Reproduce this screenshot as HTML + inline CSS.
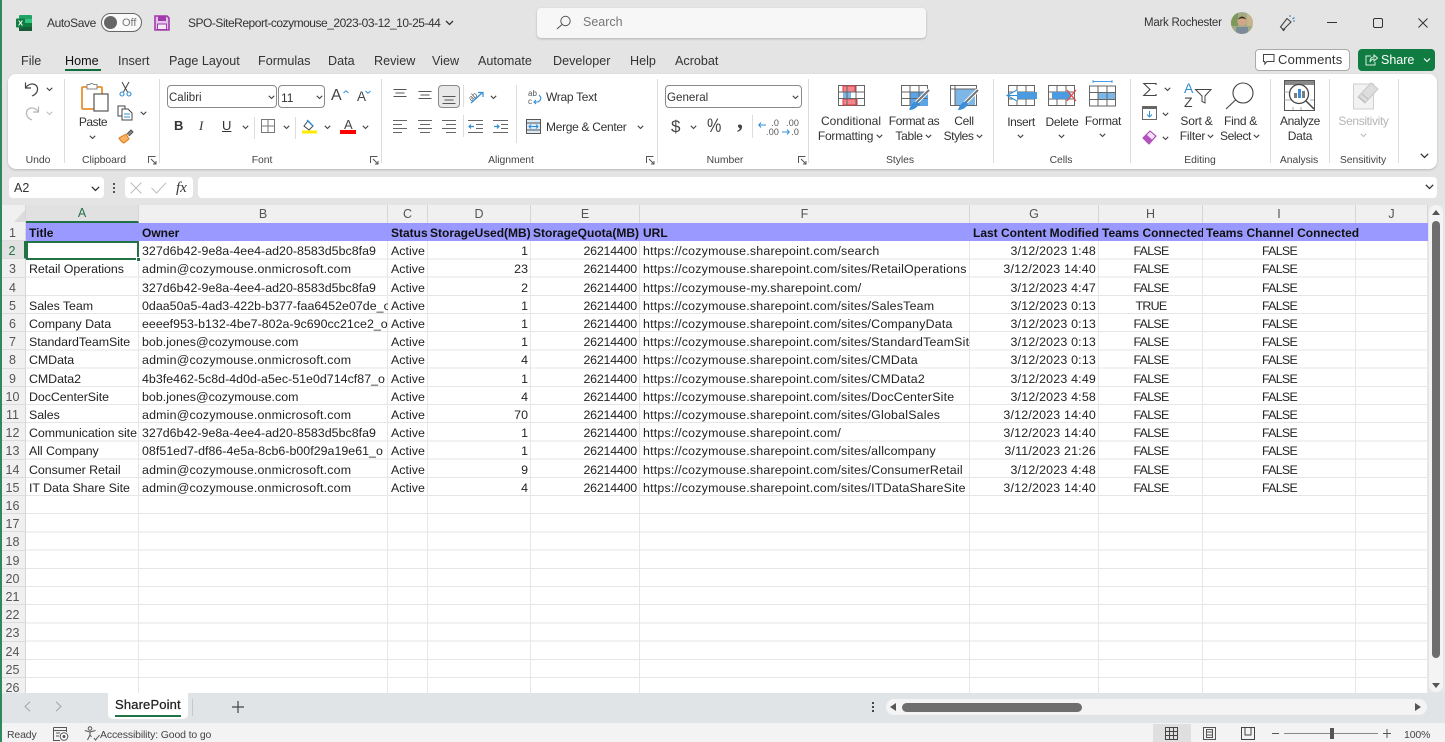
<!DOCTYPE html>
<html><head><meta charset="utf-8"><title>Excel</title>
<style>
html,body{margin:0;padding:0;width:1445px;height:742px;overflow:hidden;background:#e4e4e4}
body{font-family:"Liberation Sans",sans-serif;color:#2b2b2b;position:relative}
.t{position:absolute;white-space:nowrap;line-height:16px;font-size:12px;color:#333}
.c{transform:translateX(-50%);text-align:center}
.m{font-size:12.6px}
.g{font-size:10.4px;color:#444;letter-spacing:-.05px}
.box{position:absolute;box-sizing:border-box}
svg{position:absolute;overflow:visible}
.sep{position:absolute;width:1px;top:79px;height:84px;background:#dcdcdc}
.ch{position:absolute;top:205px;height:18px;background:#f0f0f0;border-right:1px solid #d6d6d6;box-sizing:border-box;text-align:center;font-size:12.5px;line-height:18px;color:#555}
#rows{position:absolute;left:0;top:223px;width:1428px;height:470px;overflow:hidden;background:#fff repeating-linear-gradient(to bottom,transparent 0 17.2px,#e6e6e6 17.2px 18.2px)}
.v{position:absolute;top:0;height:470px;width:1px;background:#e6e6e6}
.r{position:absolute;left:0;height:18.2px;display:flex;line-height:21px;font-size:12.4px;letter-spacing:.03px;color:#222;white-space:nowrap}
.r>*{display:block;overflow:hidden;box-sizing:border-box;padding:0 3px;flex:none;height:18.2px}
.r>*:nth-child(1){width:26px;padding:0;text-align:center;background:#f0f0f0;color:#555;letter-spacing:0;border-right:1px solid #d6d6d6;border-bottom:1px solid #dcdcdc;font-size:12.5px;font-weight:normal}
.r>*:nth-child(2){width:113px;letter-spacing:-.05px}
.r>*:nth-child(3){width:249px}
.r>*:nth-child(4){width:40px}
.r>*:nth-child(5){width:103px;text-align:right}
.r>*:nth-child(6){width:109px;text-align:right;letter-spacing:-.2px}
.r>*:nth-child(7){width:330px;letter-spacing:.2px}
.r>*:nth-child(8){width:129px;text-align:right;letter-spacing:.2px}
.r>*:nth-child(9){width:104px;text-align:center;letter-spacing:-.7px}
.r>*:nth-child(10){width:153px;text-align:center;letter-spacing:-.7px}
.r>.e{letter-spacing:.19px}
.h{background:#9999ff;font-weight:bold;font-size:12px;color:#111;width:1428px}
.h>*:nth-child(n+2){text-align:left;letter-spacing:0}
.h>*:nth-child(10){overflow:visible}
.h>*:nth-child(5),.h>*:nth-child(6){padding:0 2px}
</style></head><body>

<!-- Title bar -->
<svg style="left:16px;top:15px" width="16" height="16" viewBox="0 0 16 16"><rect x="3" y="0" width="13" height="16" rx="1" fill="#21a366"/><rect x="9" y="4" width="7" height="4" fill="#33c481"/><rect x="9" y="8" width="7" height="4" fill="#107c41"/><rect x="3" y="12" width="13" height="4" fill="#185c37"/><rect x="0" y="3.5" width="9" height="9" rx="1" fill="#107c41"/><text x="4.5" y="10.5" font-size="7.5" font-weight="bold" fill="#fff" text-anchor="middle" font-family="Liberation Sans">X</text></svg>
<span class="t" style="left:47px;top:15px;letter-spacing:-.4px">AutoSave</span>
<div class="box" style="left:101px;top:13px;width:41px;height:19px;border:1px solid #666;border-radius:10px;background:#fafafa"></div>
<div class="box" style="left:104px;top:16px;width:13px;height:13px;border-radius:50%;background:#666"></div>
<span class="t" style="left:122px;top:15px;font-size:11px;color:#777">Off</span>
<svg style="left:154px;top:15px" width="16" height="16" viewBox="0 0 16 16"><path d="M1 1H13L15 3V15H1Z" fill="#e3c4ea" stroke="#a13aaa" stroke-width="1.6"/><rect x="4" y="1.5" width="8" height="4.5" fill="#a13aaa"/><rect x="3.5" y="9" width="9" height="5.5" fill="#f4e8f6" stroke="#a13aaa"/></svg>
<span class="t" style="left:188px;top:15px;font-size:12px;letter-spacing:-.48px">SPO-SiteReport-cozymouse_2023-03-12_10-25-44</span>
<svg style="left:445px;top:20px" width="9" height="6" viewBox="0 0 9 6"><path d="M1 1L4.500 4.500L8 1" fill="none" stroke="#333" stroke-width="1.300"/></svg>

<div class="box" style="left:537px;top:8px;width:389px;height:30px;background:#f7f7f7;border-radius:4px;box-shadow:0 1px 2px rgba(0,0,0,.22)"></div>
<svg style="left:556px;top:15px" width="16" height="15" viewBox="0 0 16 15"><circle cx="9.500" cy="6" r="4.700" fill="none" stroke="#555" stroke-width="1"/><path d="M6 9.500L1 14" stroke="#555" stroke-width="1.100"/></svg>
<span class="t" style="left:583px;top:14px;font-size:12.5px;color:#777">Search</span>

<span class="t" style="left:1144px;top:15px;font-size:11.500px;letter-spacing:-.25px">Mark Rochester</span>
<svg style="left:1231px;top:12px" width="22" height="22" viewBox="0 0 22 22"><defs><clipPath id="av"><circle cx="11" cy="11" r="11"/></clipPath></defs><g clip-path="url(#av)"><rect width="22" height="22" fill="#a3ab86"/><rect x="0" y="0" width="7" height="14" fill="#7b9a5a"/><rect x="16" y="2" width="6" height="12" fill="#c7b58d"/><rect x="5" y="15" width="12" height="7" fill="#7d8a98"/><circle cx="11" cy="9" r="4.800" fill="#d0a888"/><path d="M6.500 7.500Q11 1.500 15.500 7.500Q11 5 6.500 7.500Z" fill="#33291f"/></g></svg>
<svg style="left:1279px;top:14px" width="18" height="18" viewBox="0 0 18 18"><path d="M1.500 13L8 4.500L12 8L4.500 15.500ZM3 14.500L4.500 16.500L6 15" fill="none" stroke="#444" stroke-width="1.100"/><path d="M11 3V1M13.500 5L15.500 3.500M14 7H16" stroke="#3a86c8" stroke-width="1.100"/></svg>
<div class="box" style="left:1327px;top:22px;width:10px;height:1px;background:#333"></div>
<div class="box" style="left:1373px;top:18px;width:10px;height:10px;border:1.200px solid #333;border-radius:2px"></div>
<svg style="left:1418px;top:18px" width="10" height="10" viewBox="0 0 10 10"><path d="M.5 .5L9.500 9.500M9.500 .5L.5 9.500" stroke="#333" stroke-width="1"/></svg>

<!-- Menu -->
<span class="t m" style="left:21px;top:53px">File</span>
<span class="t m" style="left:65px;top:53px;color:#111">Home</span>
<div class="box" style="left:65px;top:69px;width:36px;height:2px;background:#0f6c3c"></div>
<span class="t m" style="left:118px;top:53px">Insert</span>
<span class="t m" style="left:169px;top:53px">Page Layout</span>
<span class="t m" style="left:258px;top:53px">Formulas</span>
<span class="t m" style="left:328px;top:53px">Data</span>
<span class="t m" style="left:374px;top:53px">Review</span>
<span class="t m" style="left:432px;top:53px">View</span>
<span class="t m" style="left:478px;top:53px">Automate</span>
<span class="t m" style="left:553px;top:53px">Developer</span>
<span class="t m" style="left:630px;top:53px">Help</span>
<span class="t m" style="left:675px;top:53px">Acrobat</span>

<div class="box" style="left:1255px;top:49px;width:95px;height:22px;background:#fff;border:1px solid #aaa;border-radius:4px"></div>
<svg style="left:1263px;top:54px" width="12" height="11" viewBox="0 0 12 11"><path d="M.5 .5H11V7.500H4L1.800 10V7.500H.5Z" fill="none" stroke="#444"/></svg>
<span class="t" style="left:1278px;top:52px;font-size:13px;letter-spacing:.2px">Comments</span>
<div class="box" style="left:1358px;top:49px;width:77px;height:22px;background:#107c41;border-radius:4px"></div>
<svg style="left:1365px;top:54px" width="13" height="12" viewBox="0 0 13 12"><path d="M6 2H1V11H10V8M5 8Q5 3 9 3V1L12.500 4L9 7V5Q6.500 5 5 8Z" fill="none" stroke="#d8eee1"/></svg>
<span class="t" style="left:1381px;top:52px;font-size:12.500px;color:#fff">Share</span>
<svg style="left:1423px;top:58px" width="8" height="5" viewBox="0 0 8 5"><path d="M1 .5L4 3.500L7 .5" fill="none" stroke="#fff" stroke-width="1.100"/></svg>

<!-- Ribbon -->
<div class="box" style="left:8px;top:74px;width:1429px;height:95px;background:#fff;border-radius:8px;box-shadow:0 1px 2px rgba(0,0,0,.2)"></div>
<div class="sep" style="left:64px"></div><div class="sep" style="left:159px"></div><div class="sep" style="left:381px"></div><div class="sep" style="left:657px"></div><div class="sep" style="left:808px"></div><div class="sep" style="left:993px"></div><div class="sep" style="left:1130px"></div><div class="sep" style="left:1270px"></div><div class="sep" style="left:1329px"></div><div class="sep" style="left:1398px"></div>

<span class="t g c" style="left:38px;top:153px">Undo</span>
<span class="t g c" style="left:104px;top:153px">Clipboard</span>
<span class="t g c" style="left:262px;top:153px">Font</span>
<span class="t g c" style="left:511px;top:153px">Alignment</span>
<span class="t g c" style="left:725px;top:153px">Number</span>
<span class="t g c" style="left:900px;top:153px">Styles</span>
<span class="t g c" style="left:1061px;top:153px">Cells</span>
<span class="t g c" style="left:1200px;top:153px">Editing</span>
<span class="t g c" style="left:1299px;top:153px">Analysis</span>
<span class="t g c" style="left:1363px;top:153px">Sensitivity</span>

<!-- dialog launchers -->
<svg width="0" height="0" style="left:0;top:0"><defs><g id="dl"><path d="M.5 7V.5H7.500M3 3L8 8M8 5V8H5" fill="none" stroke="#555" stroke-width="1"/></g><g id="cv"><path d="M.8 .8L3.500 3.500L6.200 .8" fill="none" stroke="#444" stroke-width="1.100"/></g></defs></svg>
<svg style="left:148px;top:156px" width="9" height="9"><use href="#dl"/></svg>
<svg style="left:370px;top:156px" width="9" height="9"><use href="#dl"/></svg>
<svg style="left:646px;top:156px" width="9" height="9"><use href="#dl"/></svg>
<svg style="left:798px;top:156px" width="9" height="9"><use href="#dl"/></svg>

<!-- Undo/redo -->
<svg style="left:24px;top:81px" width="16" height="16" viewBox="0 0 16 16"><path d="M1.500 1.500V7H7M1.800 6.500Q5 2.500 9 3Q14 4 13.500 9Q13 13 8 15" fill="none" stroke="#444" stroke-width="1.200"/></svg>
<svg style="left:46px;top:87px" width="7" height="5"><use href="#cv"/></svg>
<svg style="left:24px;top:105px" width="16" height="16" viewBox="0 0 16 16"><path d="M14.500 1.500V7H9M14.200 6.500Q11 2.500 7 3Q2 4 2.500 9Q3 13 8 15" fill="none" stroke="#b5b5b5" stroke-width="1.200"/></svg>
<svg style="left:46px;top:111px" width="7" height="5"><use href="#cv" opacity=".35"/></svg>

<!-- Clipboard -->
<svg style="left:81px;top:82px" width="28" height="30" viewBox="0 0 28 30"><rect x="1" y="5" width="20" height="22" rx="1" fill="#fff" stroke="#e8912f" stroke-width="1.800"/><path d="M6 5V2.500H9Q10.500 0 12.500 2.500H16V7H6Z" fill="#fff" stroke="#888"/><rect x="13" y="12" width="14" height="17" fill="#fff" stroke="#555" stroke-width="1.200"/></svg>
<span class="t c" style="left:93px;top:114px;letter-spacing:-.5px">Paste</span>
<svg style="left:89px;top:135px" width="7" height="5"><use href="#cv"/></svg>
<svg style="left:119px;top:81px" width="13" height="16" viewBox="0 0 13 16"><path d="M3 1L8.500 11M10 1L4.500 11" stroke="#444" fill="none"/><circle cx="3" cy="13" r="2" fill="none" stroke="#2f8fd6" stroke-width="1.100"/><circle cx="10" cy="13" r="2" fill="none" stroke="#2f8fd6" stroke-width="1.100"/></svg>
<svg style="left:117px;top:105px" width="17" height="16" viewBox="0 0 17 16"><path d="M5 11H1V1H8V4" fill="none" stroke="#444"/><path d="M5 4H11L15 8V15H5Z" fill="#fff" stroke="#444"/><path d="M7 9H13M7 12H13" stroke="#2f8fd6"/></svg>
<svg style="left:140px;top:111px" width="7" height="5"><use href="#cv"/></svg>
<svg style="left:118px;top:129px" width="16" height="15" viewBox="0 0 16 15"><path d="M1 9L8 5L11 10L6 14Q3 13 1 9Z" fill="#f7b267" stroke="#e07a12"/><path d="M9 5L13 1L15 3L11 7" fill="#888" stroke="#555"/></svg>

<!-- Font -->
<div class="box" style="left:167px;top:85px;width:110px;height:23px;border:1px solid #8a8a8a;border-radius:4px"></div>
<span class="t" style="left:169px;top:90px;font-size:11.500px">Calibri</span>
<svg style="left:268px;top:95px" width="7" height="5"><use href="#cv"/></svg>
<div class="box" style="left:278px;top:85px;width:47px;height:23px;border:1px solid #8a8a8a;border-radius:4px"></div>
<span class="t" style="left:281px;top:90px;font-size:12px">11</span>
<svg style="left:316px;top:95px" width="7" height="5"><use href="#cv"/></svg>
<span class="t" style="left:331px;top:88px;font-size:16px;color:#444">A</span>
<svg style="left:343px;top:90px" width="6" height="4"><path d="M.5 3L3 .8L5.500 3" fill="none" stroke="#2f8fd6"/></svg>
<span class="t" style="left:357px;top:89px;font-size:13.500px;color:#444">A</span>
<svg style="left:365px;top:90px" width="6" height="4"><path d="M.5 1L3 3.200L5.500 1" fill="none" stroke="#2f8fd6"/></svg>
<span class="t" style="left:174px;top:118px;font-size:13px;font-weight:bold">B</span>
<span class="t" style="left:199px;top:118px;font-size:13px;font-style:italic;font-family:'Liberation Serif',serif">I</span>
<span class="t" style="left:222px;top:118px;font-size:13px;text-decoration:underline">U</span>
<svg style="left:242px;top:125px" width="7" height="5"><use href="#cv"/></svg>
<div class="box" style="left:254px;top:117px;width:1px;height:22px;background:#ddd"></div>
<svg style="left:261px;top:119px" width="14" height="14" viewBox="0 0 14 14"><path d="M.5 .5H13.500V13.500H.5ZM7 .5V13.500M.5 7H13.500" fill="none" stroke="#777"/></svg>
<svg style="left:283px;top:125px" width="7" height="5"><use href="#cv"/></svg>
<div class="box" style="left:295px;top:117px;width:1px;height:22px;background:#ddd"></div>
<svg style="left:302px;top:119px" width="15" height="15" viewBox="0 0 15 15"><path d="M2 7L6 2L11 7L7 11Z" fill="#fff" stroke="#444"/><path d="M5 1L11 7" stroke="#2f8fd6" stroke-width="1.500"/><rect x="0" y="11.500" width="15" height="3" fill="#ffed00"/></svg>
<svg style="left:324px;top:125px" width="7" height="5"><use href="#cv"/></svg>
<span class="t" style="left:344px;top:117px;font-size:13px;color:#444">A</span>
<div class="box" style="left:340px;top:130px;width:16px;height:4px;background:#f00"></div>
<svg style="left:362px;top:125px" width="7" height="5"><use href="#cv"/></svg>

<!-- Alignment -->
<svg style="left:393px;top:89px" width="14" height="10" viewBox="0 0 14 10"><path d="M.5 .5H13.500M2.500 4H11.500M.5 7.500H13.500" stroke="#555"/></svg>
<svg style="left:418px;top:91px" width="14" height="10" viewBox="0 0 14 10"><path d="M.5 .5H13.500M2.500 4H11.500M.5 7.500H13.500" stroke="#555"/></svg>
<div class="box" style="left:438px;top:85px;width:22px;height:23px;background:#e8e8e8;border:1px solid #8a8a8a;border-radius:4px"></div>
<svg style="left:442px;top:96px" width="14" height="10" viewBox="0 0 14 10"><path d="M.5 .5H13.500M2.500 4H11.500M.5 7.500H13.500" stroke="#555"/></svg>
<svg style="left:468px;top:88px" width="17" height="17" viewBox="0 0 17 17"><text x="0" y="11" font-size="8" fill="#555" transform="rotate(-40 5 8)" font-family="Liberation Sans">ab</text><path d="M3 15L14 5M10 4.500H15V9" fill="none" stroke="#2f8fd6" stroke-width="1.200"/></svg>
<svg style="left:490px;top:95px" width="7" height="5"><use href="#cv"/></svg>
<div class="box" style="left:463px;top:85px;width:1px;height:22px;background:#ddd"></div>
<svg style="left:393px;top:120px" width="14" height="14" viewBox="0 0 14 14"><path d="M0 .5H14M0 4.500H9M0 8.500H14M0 12.500H9" stroke="#666"/></svg>
<svg style="left:418px;top:120px" width="14" height="14" viewBox="0 0 14 14"><path d="M0 .5H14M2 4.500H12M0 8.500H14M2 12.500H12" stroke="#666"/></svg>
<svg style="left:442px;top:120px" width="14" height="14" viewBox="0 0 14 14"><path d="M0 .5H14M4 4.500H14M0 8.500H14M4 12.500H14" stroke="#666"/></svg>
<div class="box" style="left:463px;top:115px;width:1px;height:22px;background:#ddd"></div>
<svg style="left:468px;top:120px" width="15" height="14" viewBox="0 0 15 14"><path d="M0 .5H15M8 4.500H15M8 8.500H15M0 12.500H15" stroke="#666"/><path d="M6 6.500H1M3 4.500L1 6.500L3 8.500" fill="none" stroke="#2f8fd6" stroke-width="1.200"/></svg>
<svg style="left:493px;top:120px" width="15" height="14" viewBox="0 0 15 14"><path d="M0 .5H15M8 4.500H15M8 8.500H15M0 12.500H15" stroke="#666"/><path d="M1 6.500H6M4 4.500L6 6.500L4 8.500" fill="none" stroke="#2f8fd6" stroke-width="1.200"/></svg>
<div class="box" style="left:516px;top:85px;width:1px;height:58px;background:#ddd"></div>
<svg style="left:528px;top:89px" width="15" height="16" viewBox="0 0 15 16"><text x="0" y="7" font-size="8" fill="#555" font-family="Liberation Sans">ab</text><text x="0" y="15" font-size="8" fill="#555" font-family="Liberation Sans">c</text><path d="M11 6Q15 10 10 13H6M8 11L6 13L8 15" fill="none" stroke="#2f8fd6" stroke-width="1.100"/></svg>
<span class="t" style="left:546px;top:89px;letter-spacing:-.3px">Wrap Text</span>
<svg style="left:526px;top:119px" width="15" height="15" viewBox="0 0 15 15"><rect x=".5" y=".5" width="14" height="14" fill="#dbeaf7" stroke="#555"/><path d="M.5 4H14.500M.5 11H14.500" stroke="#555"/><path d="M3 7.500H12M5 5.500L3 7.500L5 9.500M10 5.500L12 7.500L10 9.500" fill="none" stroke="#2f8fd6"/></svg>
<span class="t" style="left:546px;top:119px;letter-spacing:-.3px">Merge &amp; Center</span>
<svg style="left:637px;top:125px" width="7" height="5"><use href="#cv"/></svg>

<!-- Number -->
<div class="box" style="left:665px;top:85px;width:137px;height:23px;border:1px solid #8a8a8a;border-radius:4px"></div>
<span class="t" style="left:667px;top:90px;font-size:11.600px">General</span>
<svg style="left:792px;top:95px" width="7" height="5"><use href="#cv"/></svg>
<span class="t" style="left:671px;top:119px;font-size:17px;color:#444">$</span>
<svg style="left:690px;top:125px" width="7" height="5"><use href="#cv"/></svg>
<span class="t" style="left:707px;top:119px;font-size:19px;color:#444;transform:scaleX(.85);transform-origin:0 50%">%</span>
<span class="t" style="left:737px;top:113px;font-size:24px;font-weight:bold;color:#444;font-family:'Liberation Serif',serif">,</span>
<div class="box" style="left:752px;top:115px;width:1px;height:23px;background:#ddd"></div>
<span class="t" style="left:766px;top:119px;font-size:9px;line-height:9px;color:#555;white-space:pre-line;text-align:right;letter-spacing:.2px">.0
.00</span>
<svg style="left:758px;top:122px" width="8" height="6"><path d="M8 3H1M3 .5L.8 3L3 5.500" fill="none" stroke="#2f8fd6"/></svg>
<span class="t" style="left:786px;top:119px;font-size:9px;line-height:9px;color:#555;white-space:pre-line;letter-spacing:.2px;text-align:right">.00
.0</span>
<svg style="left:782px;top:129px" width="8" height="6"><path d="M0 3H7M5 .5L7.200 3L5 5.500" fill="none" stroke="#2f8fd6"/></svg>

<!-- Styles -->
<svg style="left:838px;top:85px" width="27" height="21" viewBox="0 0 27 21"><rect x=".5" y=".5" width="26" height="20" fill="#fff" stroke="#666"/><rect x="5" y="1" width="12" height="6" fill="#f4848d" stroke="#e03a3a"/><rect x="5" y="7" width="8" height="6" fill="#7db7e8"/><rect x="5" y="14" width="14" height="6" fill="#f4848d" stroke="#e03a3a"/><path d="M.5 7H26.500M.5 13.500H26.500M9 .5V20.500M18 .5V20.500" stroke="#666" fill="none"/></svg>
<span class="t c" style="left:851px;top:113px">Conditional</span>
<span class="t c" style="left:845.500px;top:128px;letter-spacing:-.2px">Formatting</span>
<svg style="left:876px;top:134px" width="7" height="5"><use href="#cv"/></svg>
<svg style="left:901px;top:85px" width="29" height="26" viewBox="0 0 29 26"><rect x=".5" y=".5" width="26" height="20" fill="#fff" stroke="#666"/><rect x="9" y="7" width="18" height="14" fill="#5ba4e6"/><path d="M.5 7H26.500M.5 13.500H26.500M9 .5V20.500M18 .5V20.500" stroke="#666" fill="none"/><path d="M28 5L15 18" stroke="#fff" stroke-width="4"/><path d="M28 5L15 18" stroke="#777" stroke-width="2"/><path d="M16 16Q10 18 8 25Q15 25 18 19Z" fill="#3a8fd8"/></svg>
<span class="t c" style="left:914px;top:113px;letter-spacing:-.4px">Format as</span>
<span class="t c" style="left:909px;top:128px;letter-spacing:-.3px">Table</span>
<svg style="left:925px;top:134px" width="7" height="5"><use href="#cv"/></svg>
<svg style="left:950px;top:85px" width="29" height="26" viewBox="0 0 29 26"><rect x=".5" y=".5" width="26" height="20" fill="#fff" stroke="#666"/><rect x="5" y="4" width="20" height="16" fill="#7db7e8"/><path d="M.5 4H26.500M5 .5V20.500" stroke="#666"/><path d="M28 5L15 18" stroke="#fff" stroke-width="4"/><path d="M28 5L15 18" stroke="#777" stroke-width="2"/><path d="M16 16Q10 18 8 25Q15 25 18 19Z" fill="#3a8fd8"/></svg>
<span class="t c" style="left:964px;top:113px;letter-spacing:-.3px">Cell</span>
<span class="t c" style="left:958.500px;top:128px;letter-spacing:-.5px">Styles</span>
<svg style="left:976px;top:134px" width="7" height="5"><use href="#cv"/></svg>

<!-- Cells -->
<svg style="left:1006px;top:85px" width="31" height="21" viewBox="0 0 31 21"><rect x="2.500" y=".5" width="26" height="20" fill="#fff" stroke="#666"/><path d="M2.500 7H28.500M2.500 14H28.500M11 .5V20.500M20 .5V20.500" stroke="#666"/><rect x="10" y="7" width="21" height="7" fill="#4a9be0"/><path d="M11 5L1 10.500L11 16M1 10.500H11" fill="#fff" stroke="#2f8fd6"/></svg>
<span class="t c" style="left:1021px;top:114px;letter-spacing:-.4px">Insert</span>
<svg style="left:1017px;top:134px" width="7" height="5"><use href="#cv"/></svg>
<svg style="left:1048px;top:85px" width="29" height="21" viewBox="0 0 29 21"><rect x=".5" y=".5" width="26" height="20" fill="#fff" stroke="#666"/><path d="M.5 7H26.500M.5 14H26.500M9 .5V20.500M18 .5V20.500" stroke="#666"/><rect x="4" y="7" width="14" height="7" fill="#4a9be0"/><path d="M18 6L24 10.500L18 15" fill="#4a9be0"/><path d="M19 5L28 16M28 5L19 16" stroke="#e8453c" stroke-width="1.200"/></svg>
<span class="t c" style="left:1062px;top:114px;letter-spacing:-.3px">Delete</span>
<svg style="left:1058px;top:134px" width="7" height="5"><use href="#cv"/></svg>
<svg style="left:1089px;top:80px" width="27" height="27" viewBox="0 0 27 27"><path d="M4 1.500H23M4 0V3M23 0V3" stroke="#4a9be0"/><rect x=".5" y="6" width="26" height="20" fill="#fff" stroke="#666"/><rect x="9" y="12.500" width="17" height="7" fill="#7db7e8"/><path d="M.5 12.500H26.500M.5 19.500H26.500M9 6V26M18 6V26" stroke="#666"/></svg>
<span class="t c" style="left:1103px;top:113px;letter-spacing:-.3px">Format</span>
<svg style="left:1099px;top:133px" width="7" height="5"><use href="#cv"/></svg>

<!-- Editing -->
<svg style="left:1143px;top:83px" width="14" height="13" viewBox="0 0 14 13"><path d="M13 2V.5H.8L7 6.500L.8 12.500H13V11" fill="none" stroke="#444" stroke-width="1.100"/></svg>
<svg style="left:1164px;top:87px" width="7" height="5"><use href="#cv"/></svg>
<svg style="left:1142px;top:106px" width="15" height="14" viewBox="0 0 15 14"><rect x=".5" y=".5" width="14" height="13" fill="#fff" stroke="#666"/><rect x="0" y="0" width="15" height="3" fill="#666"/><path d="M7.500 5V11M5 8.500L7.500 11L10 8.500" fill="none" stroke="#2f8fd6"/></svg>
<svg style="left:1162px;top:112px" width="7" height="5"><use href="#cv"/></svg>
<svg style="left:1142px;top:130px" width="15" height="15" viewBox="0 0 15 15"><path d="M1 8L8 1L14 6L7 14Z" fill="#f4dff7" stroke="#a13aaa"/><path d="M1 8L4.500 4.500L10.500 10L7 14Z" fill="#b455bf"/></svg>
<svg style="left:1162px;top:136px" width="7" height="5"><use href="#cv"/></svg>
<span class="t" style="left:1184px;top:81px;font-size:14px;line-height:14px;color:#2f8fd6">A</span>
<span class="t" style="left:1184px;top:95px;font-size:14px;line-height:14px;color:#444">Z</span>
<svg style="left:1195px;top:89px" width="17" height="15" viewBox="0 0 17 15"><path d="M.5 .5H16L10 7V14L7 12.500V7Z" fill="#fff" stroke="#444"/></svg>
<span class="t c" style="left:1196.500px;top:113px;letter-spacing:-.2px">Sort &amp;</span>
<span class="t c" style="left:1192.500px;top:128px;letter-spacing:-.2px">Filter</span>
<svg style="left:1207px;top:134px" width="7" height="5"><use href="#cv"/></svg>
<svg style="left:1225px;top:82px" width="30" height="28" viewBox="0 0 30 28"><circle cx="18" cy="11" r="10" fill="#fff" stroke="#444" stroke-width="1.100"/><path d="M10.500 18L1 27" stroke="#444" stroke-width="1.100"/></svg>
<span class="t c" style="left:1240.500px;top:113px;letter-spacing:-.3px">Find &amp;</span>
<span class="t c" style="left:1235.500px;top:128px;letter-spacing:-.4px">Select</span>
<svg style="left:1253px;top:134px" width="7" height="5"><use href="#cv"/></svg>

<!-- Analyze -->
<svg style="left:1284px;top:80px" width="32" height="31" viewBox="0 0 32 31"><rect x=".5" y=".5" width="30" height="30" fill="#fff" stroke="#555"/><rect x="1" y="1" width="29" height="4" fill="#888"/><path d="M.5 12H5M.5 20H7M26 20H30M9 27V30M17 27V30" stroke="#aaa"/><circle cx="15" cy="14" r="9.500" fill="#fff" stroke="#444" stroke-width="1.300"/><path d="M22 21L30 29" stroke="#444" stroke-width="1.500"/><rect x="10" y="13" width="3" height="5" fill="#7c7c7c"/><rect x="14" y="9" width="3" height="9" fill="#3a8fd8"/><rect x="18" y="11" width="3" height="7" fill="#7c7c7c"/></svg>
<span class="t c" style="left:1300px;top:113px;letter-spacing:-.4px">Analyze</span>
<span class="t c" style="left:1300px;top:128px;letter-spacing:-.2px">Data</span>

<!-- Sensitivity -->
<svg style="left:1353px;top:81px" width="28" height="29" viewBox="0 0 28 29"><rect x=".5" y="3" width="20" height="25" fill="#f2f2f2" stroke="#cfcfcf"/><path d="M5 16L18 2L25 8L12 22Z" fill="#ddd" stroke="#c8c8c8"/><path d="M6 16L12 21M9 13L15 18" stroke="#bbb"/></svg>
<span class="t c" style="left:1363.500px;top:113px;color:#b5b5b5;letter-spacing:-.35px">Sensitivity</span>
<svg style="left:1360px;top:133px" width="7" height="5"><use href="#cv" opacity=".35"/></svg>
<svg style="left:1420px;top:153px" width="9" height="6" viewBox="0 0 9 6"><path d="M.8 .8L4.500 4.500L8.200 .8" fill="none" stroke="#333" stroke-width="1.300"/></svg>

<!-- Formula bar -->
<div class="box" style="left:9px;top:177px;width:95px;height:21px;background:#fff;border-radius:4px"></div>
<span class="t" style="left:14px;top:180px;font-size:12.500px">A2</span>
<svg style="left:91px;top:186px" width="9" height="6" viewBox="0 0 9 6"><path d="M.8 .8L4.500 4.500L8.200 .8" fill="none" stroke="#333" stroke-width="1.300"/></svg>
<div class="box" style="left:113px;top:183px;width:2px;height:2px;background:#555;box-shadow:0 4px #555,0 8px #555"></div>
<div class="box" style="left:125px;top:177px;width:68px;height:21px;background:#fff;border-radius:4px"></div>
<svg style="left:130px;top:182px" width="12" height="12" viewBox="0 0 12 12"><path d="M.5 .5L11.500 11.500M11.500 .5L.5 11.500" stroke="#bcbcbc"/></svg>
<svg style="left:151px;top:182px" width="16" height="12" viewBox="0 0 16 12"><path d="M.5 6L5.500 11L15 .8" fill="none" stroke="#bcbcbc"/></svg>
<span class="t" style="left:176px;top:180px;font-size:15px;font-style:italic;font-family:'Liberation Serif',serif;color:#333">fx</span>
<div class="box" style="left:198px;top:177px;width:1239px;height:21px;background:#fff;border-radius:4px"></div>
<svg style="left:1425px;top:184px" width="9" height="6" viewBox="0 0 9 6"><path d="M.8 .8L4.500 4.500L8.200 .8" fill="none" stroke="#333" stroke-width="1.300"/></svg>

<!-- Grid column headers -->
<div class="box" style="left:0;top:205px;width:26px;height:18px;background:#f0f0f0;border-right:1px solid #d6d6d6"></div>
<svg style="left:14px;top:210px" width="11" height="12"><path d="M11 0V12H0Z" fill="#dcdcdc"/></svg>
<div class="ch" style="left:26px;width:113px;background:#e1e1e1;color:#217346;border-bottom:2px solid #217346;line-height:17px">A</div>
<div class="ch" style="left:139px;width:249px">B</div>
<div class="ch" style="left:388px;width:40px">C</div>
<div class="ch" style="left:428px;width:103px">D</div>
<div class="ch" style="left:531px;width:109px">E</div>
<div class="ch" style="left:640px;width:330px">F</div>
<div class="ch" style="left:970px;width:129px">G</div>
<div class="ch" style="left:1099px;width:104px">H</div>
<div class="ch" style="left:1203px;width:153px">I</div>
<div class="ch" style="left:1356px;width:72px">J</div>

<div id="rows">
<i class="v" style="left:138px"></i><i class="v" style="left:387px"></i><i class="v" style="left:427px"></i><i class="v" style="left:530px"></i><i class="v" style="left:639px"></i><i class="v" style="left:969px"></i><i class="v" style="left:1098px"></i><i class="v" style="left:1202px"></i><i class="v" style="left:1355px"></i><i class="v" style="left:1427px"></i>
<div class="r h" style="top:0"><b style="font-size:12.500px">1</b><span>Title</span><span>Owner</span><span>Status</span><span>StorageUsed(MB)</span><span>StorageQuota(MB)</span><span>URL</span><span>Last Content Modified</span><span>Teams Connected</span><span>Teams Channel Connected</span></div>
<div class="r" style="top:18.200px"><b style="background:#e1e1e1;color:#217346;border-right:2px solid #217346">2</b><span></span><span>327d6b42-9e8a-4ee4-ad20-8583d5bc8fa9</span><span>Active</span><span>1</span><span>26214400</span><span>https://cozymouse.sharepoint.com/search</span><span>3/12/2023 1:48</span><span>FALSE</span><span>FALSE</span></div>
<div class="r" style="top:36.400px"><b>3</b><span>Retail Operations</span><span class="e">admin@cozymouse.onmicrosoft.com</span><span>Active</span><span>23</span><span>26214400</span><span>https://cozymouse.sharepoint.com/sites/RetailOperations</span><span>3/12/2023 14:40</span><span>FALSE</span><span>FALSE</span></div>
<div class="r" style="top:54.600px"><b>4</b><span></span><span>327d6b42-9e8a-4ee4-ad20-8583d5bc8fa9</span><span>Active</span><span>2</span><span>26214400</span><span>https://cozymouse-my.sharepoint.com/</span><span>3/12/2023 4:47</span><span>FALSE</span><span>FALSE</span></div>
<div class="r" style="top:72.800px"><b>5</b><span>Sales Team</span><span>0daa50a5-4ad3-422b-b377-faa6452e07de_o</span><span>Active</span><span>1</span><span>26214400</span><span>https://cozymouse.sharepoint.com/sites/SalesTeam</span><span>3/12/2023 0:13</span><span>TRUE</span><span>FALSE</span></div>
<div class="r" style="top:91px"><b>6</b><span>Company Data</span><span>eeeef953-b132-4be7-802a-9c690cc21ce2_o</span><span>Active</span><span>1</span><span>26214400</span><span>https://cozymouse.sharepoint.com/sites/CompanyData</span><span>3/12/2023 0:13</span><span>FALSE</span><span>FALSE</span></div>
<div class="r" style="top:109.200px"><b>7</b><span>StandardTeamSite</span><span>bob.jones@cozymouse.com</span><span>Active</span><span>1</span><span>26214400</span><span>https://cozymouse.sharepoint.com/sites/StandardTeamSite</span><span>3/12/2023 0:13</span><span>FALSE</span><span>FALSE</span></div>
<div class="r" style="top:127.400px"><b>8</b><span>CMData</span><span class="e">admin@cozymouse.onmicrosoft.com</span><span>Active</span><span>4</span><span>26214400</span><span>https://cozymouse.sharepoint.com/sites/CMData</span><span>3/12/2023 0:13</span><span>FALSE</span><span>FALSE</span></div>
<div class="r" style="top:145.600px"><b>9</b><span>CMData2</span><span>4b3fe462-5c8d-4d0d-a5ec-51e0d714cf87_o</span><span>Active</span><span>1</span><span>26214400</span><span>https://cozymouse.sharepoint.com/sites/CMData2</span><span>3/12/2023 4:49</span><span>FALSE</span><span>FALSE</span></div>
<div class="r" style="top:163.800px"><b>10</b><span>DocCenterSite</span><span>bob.jones@cozymouse.com</span><span>Active</span><span>4</span><span>26214400</span><span>https://cozymouse.sharepoint.com/sites/DocCenterSite</span><span>3/12/2023 4:58</span><span>FALSE</span><span>FALSE</span></div>
<div class="r" style="top:182px"><b>11</b><span>Sales</span><span class="e">admin@cozymouse.onmicrosoft.com</span><span>Active</span><span>70</span><span>26214400</span><span>https://cozymouse.sharepoint.com/sites/GlobalSales</span><span>3/12/2023 14:40</span><span>FALSE</span><span>FALSE</span></div>
<div class="r" style="top:200.200px"><b>12</b><span>Communication site</span><span>327d6b42-9e8a-4ee4-ad20-8583d5bc8fa9</span><span>Active</span><span>1</span><span>26214400</span><span>https://cozymouse.sharepoint.com/</span><span>3/12/2023 14:40</span><span>FALSE</span><span>FALSE</span></div>
<div class="r" style="top:218.400px"><b>13</b><span>All Company</span><span>08f51ed7-df86-4e5a-8cb6-b00f29a19e61_o</span><span>Active</span><span>1</span><span>26214400</span><span>https://cozymouse.sharepoint.com/sites/allcompany</span><span>3/11/2023 21:26</span><span>FALSE</span><span>FALSE</span></div>
<div class="r" style="top:236.600px"><b>14</b><span>Consumer Retail</span><span class="e">admin@cozymouse.onmicrosoft.com</span><span>Active</span><span>9</span><span>26214400</span><span>https://cozymouse.sharepoint.com/sites/ConsumerRetail</span><span>3/12/2023 4:48</span><span>FALSE</span><span>FALSE</span></div>
<div class="r" style="top:254.800px"><b>15</b><span>IT Data Share Site</span><span class="e">admin@cozymouse.onmicrosoft.com</span><span>Active</span><span>4</span><span>26214400</span><span>https://cozymouse.sharepoint.com/sites/ITDataShareSite</span><span>3/12/2023 14:40</span><span>FALSE</span><span>FALSE</span></div>
<div class="r" style="top:273px"><b>16</b></div>
<div class="r" style="top:291.200px"><b>17</b></div>
<div class="r" style="top:309.400px"><b>18</b></div>
<div class="r" style="top:327.600px"><b>19</b></div>
<div class="r" style="top:345.800px"><b>20</b></div>
<div class="r" style="top:364px"><b>21</b></div>
<div class="r" style="top:382.200px"><b>22</b></div>
<div class="r" style="top:400.400px"><b>23</b></div>
<div class="r" style="top:418.600px"><b>24</b></div>
<div class="r" style="top:436.800px"><b>25</b></div>
<div class="r" style="top:455px"><b>26</b></div>
<div class="box" style="left:26px;top:18px;width:113px;height:19px;border:2px solid #217346"></div>
<div class="box" style="left:136px;top:34px;width:5px;height:5px;background:#217346;border:1px solid #fff"></div>
</div>

<!-- Vertical scrollbar -->
<div class="box" style="left:1428px;top:205px;width:17px;height:488px;background:#e4e7ea"></div>
<div class="box" style="left:1429px;top:205px;width:14px;height:487px;background:#f4f4f4;border-radius:7px"></div>
<div class="box" style="left:1432px;top:221px;width:8px;height:437px;background:#6e6e6e;border-radius:4px"></div>
<svg style="left:1432px;top:210px" width="8" height="6"><path d="M4 0L8 5H0Z" fill="#555"/></svg>
<svg style="left:1432px;top:683px" width="8" height="6"><path d="M0 0H8L4 5Z" fill="#555"/></svg>

<!-- Tabs bar -->
<div class="box" style="left:0;top:693px;width:1445px;height:30px;background:#e1e4e7"></div>
<svg style="left:24px;top:701px" width="7" height="11"><path d="M6 .8L1 5.500L6 10.200" fill="none" stroke="#aaa" stroke-width="1.100"/></svg>
<svg style="left:55px;top:701px" width="7" height="11"><path d="M1 .8L6 5.500L1 10.200" fill="none" stroke="#aaa" stroke-width="1.100"/></svg>
<div class="box" style="left:108px;top:693px;width:80px;height:26px;background:#fff;border-radius:0 0 5px 5px"></div>
<span class="t" style="left:115px;top:697px;font-size:13px;color:#222;-webkit-text-stroke:.25px #222;letter-spacing:.15px">SharePoint</span>
<div class="box" style="left:115px;top:715px;width:66px;height:2px;background:#217346"></div>
<div class="box" style="left:192px;top:699px;width:1px;height:17px;background:#c8c8c8"></div>
<svg style="left:232px;top:701px" width="12" height="12"><path d="M6 0V12M0 6H12" stroke="#444" stroke-width="1.200"/></svg>
<div class="box" style="left:872px;top:702px;width:2px;height:2px;background:#444;box-shadow:0 4px #444,0 8px #444"></div>
<div class="box" style="left:886px;top:699px;width:541px;height:16px;background:#f4f4f4;border-radius:8px"></div>
<svg style="left:890px;top:703px" width="7" height="8"><path d="M6 0V8L0 4Z" fill="#555"/></svg>
<div class="box" style="left:902px;top:703px;width:180px;height:9px;background:#6e6e6e;border-radius:4.500px"></div>
<svg style="left:1415px;top:703px" width="7" height="8"><path d="M0 0V8L6 4Z" fill="#555"/></svg>

<!-- Status bar -->
<div class="box" style="left:0;top:723px;width:1445px;height:19px;background:#f3f3f3"></div>
<span class="t" style="left:7px;top:727px;font-size:10.500px;color:#444;letter-spacing:-.15px">Ready</span>
<svg style="left:53px;top:727px" width="16" height="14" viewBox="0 0 16 14"><path d="M.5 .5H13.500V5M.5 .5V13.500H7M.5 3.500H13.500M3 6H7M3 9H6" fill="none" stroke="#555"/><circle cx="11" cy="9.500" r="3.800" fill="#fff" stroke="#555"/><circle cx="11" cy="9.500" r="1.500" fill="#555"/></svg>
<svg style="left:84px;top:726px" width="16" height="15" viewBox="0 0 16 15"><circle cx="6" cy="2.500" r="1.800" fill="none" stroke="#555"/><path d="M.8 4.500L6 6L11.500 4.500M6 6V9M6 9L3.500 14M6 9L7.500 11M10 12L11.500 14L15.500 9" fill="none" stroke="#555"/></svg>
<span class="t" style="left:100px;top:727px;font-size:10.500px;color:#444;letter-spacing:-.15px">Accessibility: Good to go</span>
<div class="box" style="left:1153px;top:724px;width:38px;height:18px;background:#dfdfdf"></div>
<svg style="left:1165px;top:727px" width="13" height="13" viewBox="0 0 13 13"><path d="M.5 .5H12.500V12.500H.5ZM4.500 .5V12.500M8.500 .5V12.500M.5 4.500H12.500M.5 8.500H12.500" fill="none" stroke="#444"/></svg>
<svg style="left:1203px;top:727px" width="13" height="13" viewBox="0 0 13 13"><path d="M.5 .5H12.500V12.500H.5ZM3.500 2.500H9.500V10.500H3.500ZM3.500 5H9.500M3.500 8H9.500" fill="none" stroke="#555"/></svg>
<svg style="left:1241px;top:727px" width="14" height="13" viewBox="0 0 14 13"><path d="M.5 .5H13.500V12.500H.5ZM4 .5V8H10V.5" fill="none" stroke="#444"/></svg>
<div class="box" style="left:1272px;top:733px;width:7px;height:1px;background:#555"></div>
<div class="box" style="left:1284px;top:733px;width:94px;height:1px;background:#888"></div>
<div class="box" style="left:1330px;top:728px;width:4px;height:11px;background:#555"></div>
<svg style="left:1383px;top:729px" width="8" height="9"><path d="M4 0V9M0 4.500H8" stroke="#555"/></svg>
<span class="t" style="left:1404px;top:727px;font-size:10.500px;color:#444;letter-spacing:-.15px">100%</span>

<!-- window edge -->
<div class="box" style="left:0;top:0;width:2px;height:742px;background:#2f8a5b"></div>
</body></html>
